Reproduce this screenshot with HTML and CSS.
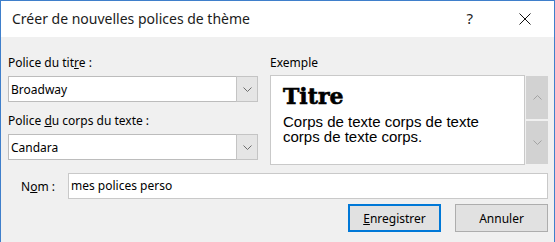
FILE: index.html
```html
<!DOCTYPE html>
<html lang="fr">
<head>
    <meta charset="UTF-8">
    <title>Créer de nouvelles polices de thème</title>
    <link rel="stylesheet" href="styles.css">
</head>
<body>
    <div class="window">
        <div class="titlebar">
            <div class="title">Créer de nouvelles polices de thème</div>
            <span class="help">?</span>
            <svg class="close" width="12" height="12" viewBox="0 0 12 12">
                <path d="M0.5 0.5 L11.5 11.5 M11.5 0.5 L0.5 11.5" stroke="#111" stroke-width="1" fill="none"/>
            </svg>
        </div>

        <div class="content">
            <div class="top">
                <div class="fonts">
                    <div class="label">Police du tit<u>r</u>e :</div>
                    <div class="combo">
                        <span class="value">Broadway</span>
                        <span class="drop">
                            <svg width="9" height="5" viewBox="0 0 9 5"><polyline points="0.5,0.5 4.5,4.5 8.5,0.5" stroke="#6d6d6d" fill="none"/></svg>
                        </span>
                    </div>
                    <div class="label second">Police <u>d</u>u corps du texte :</div>
                    <div class="combo">
                        <span class="value">Candara</span>
                        <span class="drop">
                            <svg width="9" height="5" viewBox="0 0 9 5"><polyline points="0.5,0.5 4.5,4.5 8.5,0.5" stroke="#6d6d6d" fill="none"/></svg>
                        </span>
                    </div>
                </div>

                <div class="sample">
                    <div class="label">Exemple</div>
                    <div class="sample-row">
                        <div class="preview">
                            <div class="preview-title">Titre</div>
                            <div class="preview-body">Corps de texte corps de texte corps de texte corps.</div>
                        </div>
                        <div class="scroll">
                            <span class="arrow">
                                <svg width="9" height="5" viewBox="0 0 9 5"><polyline points="0.5,4.5 4.5,0.5 8.5,4.5" stroke="#a3a3a3" fill="none"/></svg>
                            </span>
                            <span class="arrow">
                                <svg width="9" height="5" viewBox="0 0 9 5"><polyline points="0.5,0.5 4.5,4.5 8.5,0.5" stroke="#a3a3a3" fill="none"/></svg>
                            </span>
                        </div>
                    </div>
                </div>
            </div>

            <div class="name-row">
                <span class="name-label">N<u>o</u>m :</span>
                <div class="name-input">mes polices perso</div>
            </div>

            <div class="buttons">
                <button class="btn default"><u>E</u>nregistrer</button>
                <button class="btn">Annuler</button>
            </div>
        </div>
    </div>
</body>
</html>
```

FILE: styles.css
```css
html, body {
    margin: 0;
    padding: 0;
}

body {
    width: 555px;
    height: 242px;
    overflow: hidden;
    font-family: "Noto Sans", sans-serif;
    font-size: 12px;
    color: #000;
}

.window {
    box-sizing: border-box;
    height: 242px;
    border: 1px solid #3f7fcb;
    border-bottom: none;
    background: #f0f0f0;
}

.titlebar {
    display: flex;
    align-items: center;
    height: 36px;
    background: #fff;
    padding: 0 23px 0 11px;
}

.title {
    flex: 1;
    font-size: 14px;
    color: #1b1b1b;
    padding-bottom: 2px;
}

.help {
    font-size: 15px;
    color: #222;
    margin-right: 46px;
    padding-bottom: 2px;
}

.close {
    display: block;
}

.content {
    padding: 18px 6px 0 7px;
}

.top {
    display: flex;
    gap: 12px;
}

.fonts {
    width: 250px;
}

.label {
    height: 16px;
    line-height: 16px;
    margin-bottom: 5px;
}

.label.second {
    margin-top: 11px;
}

.combo {
    box-sizing: border-box;
    display: flex;
    align-items: center;
    height: 26px;
    background: #fff;
    border: 1px solid #bcbcbc;
}

.combo .value {
    flex: 1;
    padding-left: 2px;
}

.drop {
    box-sizing: border-box;
    display: flex;
    align-items: center;
    justify-content: center;
    width: 22px;
    height: 26px;
    margin: -1px -1px -1px 0;
    background: #e5e5e5;
    border: 1px solid #c4c4c4;
}

.sample {
    flex: 1;
}

.sample .label {
    margin-bottom: 4px;
}

.sample-row {
    display: flex;
    gap: 1px;
    height: 90px;
}

.preview {
    box-sizing: border-box;
    flex: 1;
    background: #fff;
    border: 1px solid #c9c9c9;
    padding: 7px 10px 0 12px;
}

.preview-title {
    font-family: "DejaVu Serif", serif;
    font-weight: bold;
    font-size: 22px;
    line-height: 26px;
    -webkit-text-stroke: 0.6px #000;
}

.preview-body {
    font-family: "Liberation Sans", sans-serif;
    font-size: 15px;
    line-height: 15px;
    width: 225px;
    margin-top: 5px;
}

.scroll {
    display: flex;
    flex-direction: column;
    gap: 2px;
    width: 22px;
    padding: 1px 0;
}

.arrow {
    flex: 1;
    display: flex;
    align-items: center;
    justify-content: center;
    background: #d2d2d2;
}

.name-row {
    display: flex;
    align-items: center;
    margin-top: 8px;
}

.name-label {
    width: 47px;
    padding-left: 13px;
}

.name-input {
    box-sizing: border-box;
    flex: 1;
    height: 26px;
    line-height: 24px;
    padding-left: 2px;
    background: #fff;
    border: 1px solid #c9c9c9;
}

.buttons {
    display: flex;
    justify-content: flex-end;
    gap: 14px;
    margin-top: 5px;
}

.btn {
    box-sizing: border-box;
    width: 93px;
    height: 28px;
    font-family: "Noto Sans", sans-serif;
    font-size: 12px;
    color: #000;
    background: #e1e1e1;
    border: 1px solid #adadad;
    padding: 0;
}

.btn.default {
    border: 2px solid #0078d7;
}
```
